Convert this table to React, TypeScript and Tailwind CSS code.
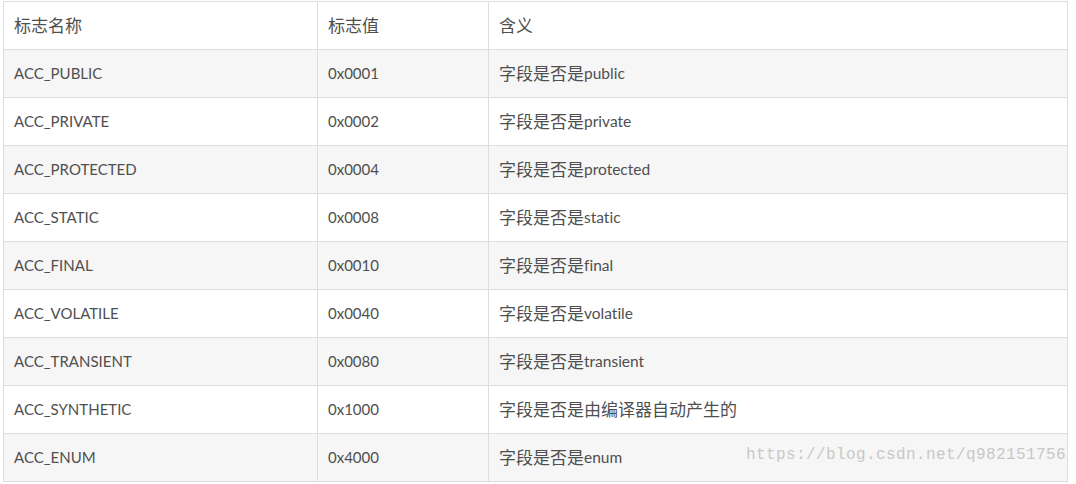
import React from 'react'

// ─── Table data ───────────────────────────────────────────────────────────────

type Row = { name: string; value: string; meaning: string }

const ROWS: Row[] = [
  { name: 'ACC_PUBLIC', value: '0x0001', meaning: '字段是否是public' },
  { name: 'ACC_PRIVATE', value: '0x0002', meaning: '字段是否是private' },
  { name: 'ACC_PROTECTED', value: '0x0004', meaning: '字段是否是protected' },
  { name: 'ACC_STATIC', value: '0x0008', meaning: '字段是否是static' },
  { name: 'ACC_FINAL', value: '0x0010', meaning: '字段是否是final' },
  { name: 'ACC_VOLATILE', value: '0x0040', meaning: '字段是否是volatile' },
  { name: 'ACC_TRANSIENT', value: '0x0080', meaning: '字段是否是transient' },
  { name: 'ACC_SYNTHETIC', value: '0x1000', meaning: '字段是否是由编译器自动产生的' },
  { name: 'ACC_ENUM', value: '0x4000', meaning: '字段是否是enum' },
]

const FONT = "font-['Lato','Noto_Sans_CJK_SC',sans-serif] [font-variant-ligatures:none]"

function Cell({ children, className = '' }: { children: React.ReactNode; className?: string }) {
  return (
    <div className={`flex h-12 items-center border-r border-b border-[#dddddd] pl-[10px] ${className}`}>
      {children}
    </div>
  )
}

export default function App() {
  return (
    <div className="relative h-[484px] w-[1076px] bg-white">
      <div
        className={`ml-[3px] mt-[1px] grid w-[1065px] grid-cols-[314px_171px_579px] border-t border-l border-[#dddddd] text-[#4f4f4f] ${FONT}`}
      >
        {/* header */}
        <Cell className="bg-white text-[17px]">标志名称</Cell>
        <Cell className="bg-white text-[17px]">标志值</Cell>
        <Cell className="bg-white text-[17px]">含义</Cell>

        {ROWS.map((r, i) => {
          const bg = i % 2 === 0 ? 'bg-[#f6f6f6]' : 'bg-white'
          const latin = r.meaning.match(/[a-z]+$/)?.[0] ?? ''
          return (
            <React.Fragment key={r.name}>
              <Cell className={`${bg} text-[15px]`}>{r.name}</Cell>
              <Cell className={`${bg} text-[15px]`}>{r.value}</Cell>
              <Cell className={`${bg}`}>
                <span className="text-[17px]">{r.meaning.replace(/[a-z]+$/, '')}</span>
                <span className="text-[15.5px]">{latin}</span>
              </Cell>
            </React.Fragment>
          )
        })}
      </div>

      {/* watermark */}
      <div className="absolute left-[746px] top-[442px] font-['Liberation_Mono',monospace] text-[16px] tracking-[0.4px] text-[#c8c8c8]">
        https://blog.csdn.net/q982151756
      </div>
    </div>
  )
}
